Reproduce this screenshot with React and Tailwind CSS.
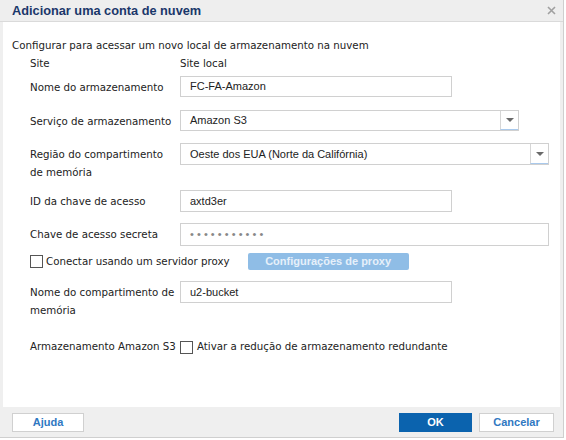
import React from "react";

const lbl = "font-['DejaVu_Sans',Verdana,sans-serif] text-[10.25px] text-[#222] whitespace-nowrap";
const val = "font-['Liberation_Sans',Arial,sans-serif] text-[11px] text-[#222]";

function Input({ w, h, children }) {
  return (
    <div
      className={`${val} flex items-center border border-[#d0d0d0] bg-white pl-[9px]`}
      style={{ width: w, height: h }}
    >
      {children}
    </div>
  );
}

function Select({ w, h, children }) {
  return (
    <div className={`${val} flex border border-[#d0d0d0] bg-white`} style={{ width: w, height: h }}>
      <div className="flex flex-1 items-center pl-[9px]">{children}</div>
      <div className="flex w-[18px] items-center justify-center border-l border-[#d6d6d6] border-b border-b-[#a9c9ec]">
        <svg width="8" height="4" viewBox="0 0 8 4">
          <path d="M0 0 L8 0 L4 4 Z" fill="#6a6a6a" />
        </svg>
      </div>
    </div>
  );
}

function Row({ label, children, className = "" }) {
  return (
    <div className={`flex items-start pl-[18px] ${className}`}>
      <div className={`${lbl} w-[150px] shrink-0 pt-[2px] leading-[18px]`}>{label}</div>
      {children}
    </div>
  );
}

function Check() {
  return <div className="h-[13px] w-[13px] shrink-0 border border-[#555] bg-white" />;
}

export default function App() {
  return (
    <div className="h-[440px] w-[566px] bg-white">
      <div className="flex h-[438px] w-[564px] flex-col border-r border-b border-[#cfcfcf]">
        <div className="flex h-[22px] items-center justify-between border-b border-[#dadada] bg-[#eeeeee] pl-[12px] pr-[7px]">
          <span className="font-['Liberation_Sans',Arial,sans-serif] text-[12.75px] font-bold text-[#1a376a]">
            Adicionar uma conta de nuvem
          </span>
          <svg width="9" height="9" viewBox="0 0 9 9">
            <path d="M1 1 L8 8 M8 1 L1 8" stroke="#a0a0a0" strokeWidth="1.6" />
          </svg>
        </div>
        <div className="flex flex-1 flex-col border-x-[3px] border-[#efefef] bg-white pl-[9px]">
          <div className={`${lbl} mt-[14px] leading-[18px]`}>
            Configurar para acessar um novo local de armazenamento na nuvem
          </div>
          <div className={`${lbl} flex pl-[18px] leading-[18px]`}>
            <div className="w-[150px]">Site</div>
            <div>Site local</div>
          </div>
          <Row label="Nome do armazenamento" className="mt-[4px]">
            <Input w={272} h={21}>FC-FA-Amazon</Input>
          </Row>
          <Row label="Serviço de armazenamento" className="mt-[13px]">
            <Select w={339} h={21}>Amazon S3</Select>
          </Row>
          <Row
            label={
              <>
                Região do compartimento
                <br />
                de memória
              </>
            }
            className="mt-[12px]"
          >
            <Select w={369} h={22}>Oeste dos EUA (Norte da Califórnia)</Select>
          </Row>
          <Row label="ID da chave de acesso" className="mt-[9px]">
            <Input w={272} h={22}>axtd3er</Input>
          </Row>
          <Row label="Chave de acesso secreta" className="mt-[11px]">
            <Input w={369} h={23}>
              <span className="text-[11px] tracking-[3.1px] text-[#888]">•••••••••••</span>
            </Input>
          </Row>
          <div className="mt-[7px] flex h-[17px] items-center pl-[18px]">
            <Check />
            <span className={`${lbl} ml-[3px]`}>Conectar usando um servidor proxy</span>
            <div className="ml-[18px] flex h-[17px] w-[161px] shrink-0 items-center justify-center rounded-[2px] bg-[#8fbde6] font-['Liberation_Sans',Arial,sans-serif] text-[11px] font-bold text-[#e6f0fa]">
              Configurações de proxy
            </div>
          </div>
          <Row
            label={
              <>
                Nome do compartimento de
                <br />
                memória
              </>
            }
            className="mt-[11px]"
          >
            <Input w={272} h={22}>u2-bucket</Input>
          </Row>
          <div className="mt-[19px] flex h-[18px] items-center pl-[18px]">
            <div className={`${lbl} w-[150px] shrink-0`}>Armazenamento Amazon S3</div>
            <Check />
            <span className={`${lbl} ml-[4px]`}>Ativar a redução de armazenamento redundante</span>
          </div>
        </div>
        <div className="flex h-[30px] items-center bg-[#efefef] pl-[12px]">
          <div className="flex h-[19px] w-[72px] items-center justify-center border border-[#d0d0d0] bg-white font-['Liberation_Sans',Arial,sans-serif] text-[11px] font-bold text-[#2f78c2]">
            Ajuda
          </div>
          <div className="ml-auto flex h-[19px] w-[73px] items-center justify-center bg-[#0b63ae] font-['Liberation_Sans',Arial,sans-serif] text-[11px] font-bold text-white">
            OK
          </div>
          <div className="ml-[7px] mr-[9px] flex h-[19px] w-[75px] items-center justify-center border border-[#d0d0d0] bg-white font-['Liberation_Sans',Arial,sans-serif] text-[11px] font-bold text-[#2f78c2]">
            Cancelar
          </div>
        </div>
      </div>
    </div>
  );
}
